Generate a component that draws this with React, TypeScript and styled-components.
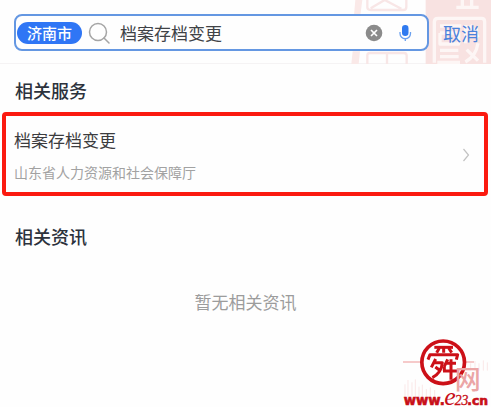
import React, { useState } from "react";
import styled, { createGlobalStyle } from "styled-components";

const GlobalStyle = createGlobalStyle`
  * { box-sizing: border-box; }
  body {
    margin: 0;
    background: #fefefe;
    color: #303238;
    font-family: "Noto Sans CJK SC", "Noto Sans", sans-serif;
  }
`;

const Page = styled.div`
  display: flex;
  flex-direction: column;
  min-height: 100vh;
  overflow: hidden;
`;

const Header = styled.header`
  position: relative;
  display: flex;
  align-items: center;
  gap: 14px;
  height: 64px;
  padding: 2px 12px 0 14px;
  border-bottom: 1px solid #f5f3f4;
`;

const SealArt = styled.svg`
  position: absolute;
  top: 0;
  right: 0;
  width: 161px;
  height: 64px;
`;

const SearchBox = styled.form`
  position: relative;
  display: flex;
  flex: 1;
  align-items: center;
  min-width: 0;
  height: 37px;
  padding: 0 13px 0 1px;
  border: 2px solid #6497e2;
  border-radius: 8px;
  background: #fefefe;
`;

const CityButton = styled.button`
  flex: none;
  height: 22px;
  padding: 0 10px;
  border: 0;
  border-radius: 11px;
  background: #2f76f5;
  color: #fff;
  font: 500 15px/22px "Noto Sans CJK SC", sans-serif;
`;

const SearchIcon = styled.svg`
  flex: none;
  width: 22px;
  height: 22px;
  margin: 0 10px 0 6px;
`;

const SearchInput = styled.input`
  flex: 1;
  min-width: 0;
  padding: 0;
  border: 0;
  outline: 0;
  background: transparent;
  color: #404246;
  font: 400 17px/24px "Noto Sans CJK SC", sans-serif;
`;

const IconButton = styled.button`
  display: flex;
  flex: none;
  margin-left: 13px;
  padding: 0;
  border: 0;
  background: none;
`;

const CancelButton = styled.button`
  position: relative;
  flex: none;
  padding: 0;
  border: 0;
  background: none;
  color: #4a82dc;
  font: 400 18px/24px "Noto Sans CJK SC", sans-serif;
`;

const Section = styled.section`
  padding-top: 14px;

  & + & {
    padding-top: 28px;
  }
`;

const SectionTitle = styled.h2`
  margin: 0 15px;
  color: #2c323c;
  font-size: 18px;
  font-weight: 500;
  line-height: 24px;
`;

const ServiceLink = styled.a`
  display: flex;
  align-items: center;
  justify-content: space-between;
  margin: 10px 3px 0 2px;
  padding: 12px 14px 10px 8px;
  border: 4px solid #fb1a10;
  border-radius: 4px;
  color: inherit;
  text-decoration: none;
`;

const ServiceText = styled.div`
  display: flex;
  flex-direction: column;
  gap: 10px;
`;

const ServiceName = styled.span`
  color: #3c3c3e;
  font-size: 17px;
  line-height: 24px;
`;

const Department = styled.span`
  color: #a2a2a2;
  font-size: 14px;
  line-height: 20px;
`;

const EmptyText = styled.p`
  margin: 42px 0 0;
  color: #9c9c9c;
  font-size: 17px;
  line-height: 24px;
  text-align: center;
`;

const Footer = styled.footer`
  display: flex;
  justify-content: flex-end;
  margin-top: auto;
`;

const SiteLink = styled.a`
  display: flex;
`;

function Seal() {
  return (
    <SealArt viewBox="0 0 483 192" aria-hidden="true">
      <path d="M76 0H97L91 46H72ZM68 154H90L86 192H64Z" fill="#fae9e8" />
      <g fill="none" stroke="#f8e6e6" strokeWidth="7">
        <path d="M112 0V22Q112 30 122 30H220Q229 30 229 20V0M122 25L164 0L214 26" />
        <path d="M112 192V166Q112 159 120 159H222Q230 159 230 167V192M171 159V192" />
      </g>
      <path d="M287 0H483V192H287Z" fill="#f8e2e1" />
      <g fill="none" stroke="#fdf6f5" strokeWidth="10" strokeLinejoin="round">
        <path d="M397 0V21M379 22H446M425 0V20" />
        <path d="M313 188V66Q313 55 324 55H455Q464 55 464 66V188" />
        <path d="M330 78H394M330 99H386V132H330V99M330 151H385M330 170H386M322 187H390" />
        <path d="M407 75V130M407 90H444M421 75L445 112M410 149L444 182M444 130Q438 169 406 186" />
      </g>
    </SealArt>
  );
}

function SiteLogo() {
  return (
    <svg width="88" height="69" viewBox="99 54 264 207" role="img" aria-label="舜网 www.e23.cn">
      <path d="M99 126H151M288 126H312" stroke="#f3b9b9" strokeWidth="4" />
      <path
        d="M105 193V232M114 180V232M126 187V232M136 178V232M147 200V232M157 194V232M169 207V232M181 202V232M194 210V232M302 130V152M315 123V152M327 130V152M340 121V152M352 127V152"
        stroke="#fae7e7"
        strokeWidth="3"
      />
      <circle cx="219.500" cy="127" r="64" fill="#fff" stroke="#cc1018" strokeWidth="11" />
      <g fill="none" stroke="#cc1018" strokeWidth="9" strokeLinejoin="round">
        <path d="M193 82H249" />
        <path d="M208 84L200 98M221 84V98M236 84L245 98" />
        <path d="M174 119L180 104H263L259 119" />
        <path d="M197 117L184 142M191 128H217Q215 158 187 173M196 141L207 149" />
        <path d="M233 118L223 139M228 130H258M243 118V179M219 153H264M223 139V153" />
      </g>
      <text x="254" y="208" fill="#eba5a5" fontFamily="Noto Sans CJK SC, sans-serif" fontSize="78" fontWeight="500">网</text>
      <g fill="#c80f18">
        <text x="101" y="256" fontFamily="DejaVu Sans, sans-serif" fontSize="40" fontWeight="700" stroke="#c80f18" strokeWidth="2">www.</text>
        <text x="223" y="254" fontFamily="Liberation Serif, serif" fontSize="78" fontStyle="italic">e</text>
        <text x="254" y="256" fontFamily="Liberation Serif, serif" fontSize="41" fontStyle="italic" stroke="#c80f18" strokeWidth="1">23</text>
        <text x="292" y="256" fontFamily="DejaVu Sans, sans-serif" fontSize="37" fontWeight="700" stroke="#c80f18" strokeWidth="2">.cn</text>
      </g>
    </svg>
  );
}

export default function App() {
  const [query, setQuery] = useState("档案存档变更");

  return (
    <>
      <GlobalStyle />
      <Page>
        <Header>
          <Seal />
          <SearchBox role="search" onSubmit={(event) => event.preventDefault()}>
            <CityButton type="button">济南市</CityButton>
            <SearchIcon viewBox="0 0 22 22" fill="none" stroke="#a5a5a5" strokeWidth="1.500" aria-hidden="true">
              <circle cx="10" cy="10" r="8.500" />
              <path d="M16 16L21 21" strokeLinecap="round" />
            </SearchIcon>
            <SearchInput
              aria-label="搜索"
              value={query}
              onChange={(event) => setQuery(event.target.value)}
            />
            <IconButton type="button" aria-label="清除" onClick={() => setQuery("")}>
              <svg width="18" height="18" viewBox="0 0 18 18">
                <circle cx="9" cy="9" r="8.300" fill="#8b8b8b" />
                <path d="M6 6L12 12M12 6L6 12" stroke="#fff" strokeWidth="1.700" />
              </svg>
            </IconButton>
            <IconButton type="button" aria-label="语音输入">
              <svg width="18" height="18" viewBox="0 0 18 18">
                <rect x="6" y="1" width="6.500" height="11" rx="3.200" fill="#2f7af0" />
                <path d="M4 8V9.500A5.200 5.200 0 0 0 14.500 9.500V8M9.300 14.500V17" fill="none" stroke="#6aa0ef" strokeWidth="1.300" />
              </svg>
            </IconButton>
          </SearchBox>
          <CancelButton type="button">取消</CancelButton>
        </Header>

        <main>
          <Section>
            <SectionTitle>相关服务</SectionTitle>
            <ServiceLink href="#service">
              <ServiceText>
                <ServiceName>档案存档变更</ServiceName>
                <Department>山东省人力资源和社会保障厅</Department>
              </ServiceText>
              <svg width="8" height="14" viewBox="0 0 8 14" fill="none" stroke="#c2c2c2" strokeWidth="1.200" aria-hidden="true">
                <path d="M1.500 1L6.500 7L1.500 13" />
              </svg>
            </ServiceLink>
          </Section>
          <Section>
            <SectionTitle>相关资讯</SectionTitle>
            <EmptyText>暂无相关资讯</EmptyText>
          </Section>
        </main>

        <Footer>
          <SiteLink href="#home">
            <SiteLogo />
          </SiteLink>
        </Footer>
      </Page>
    </>
  );
}
